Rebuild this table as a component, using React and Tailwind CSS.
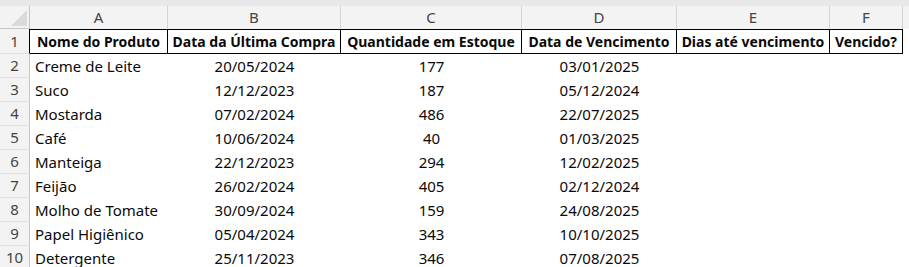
import React from "react";

const columns = [
    { key: "A", width: "w-[138px]" },
    { key: "B", width: "w-[173px]" },
    { key: "C", width: "w-[181px]" },
    { key: "D", width: "w-[155px]" },
    { key: "E", width: "w-[153px]" },
    { key: "F", width: "w-[73px]" },
];

const headers = [
    "Nome do Produto",
    "Data da Última Compra",
    "Quantidade em Estoque",
    "Data de Vencimento",
    "Dias até vencimento",
    "Vencido?",
];

const produtos = [
    ["Creme de Leite", "20/05/2024", "177", "03/01/2025"],
    ["Suco", "12/12/2023", "187", "05/12/2024"],
    ["Mostarda", "07/02/2024", "486", "22/07/2025"],
    ["Café", "10/06/2024", "40", "01/03/2025"],
    ["Manteiga", "22/12/2023", "294", "12/02/2025"],
    ["Feijão", "26/02/2024", "405", "02/12/2024"],
    ["Molho de Tomate", "30/09/2024", "159", "24/08/2025"],
    ["Papel Higiênico", "05/04/2024", "343", "10/10/2025"],
    ["Detergente", "25/11/2023", "346", "07/08/2025"],
];

const RowNumber = ({ n, dark }) => (
    <div
        className={`w-[30px] shrink-0 flex items-center justify-center bg-[#f3f3f3] text-[#444] border-b border-[#e1e1e1] border-r ${dark ? "border-r-black" : "border-r-[#c6c6c6]"}`}
    >
        {n}
    </div>
);

const App = () => {
    return (
        <div
            className="w-[909px] h-[267px] overflow-hidden bg-white text-[15px] text-[#0a0a0a]"
            style={{ fontFamily: '"Noto Sans", "Open Sans", sans-serif' }}
        >
            {/* faixa superior */}
            <div className="h-[6px] bg-[#e8e8e8]" />

            {/* letras das colunas */}
            <div className="flex h-[23px] bg-[#f3f3f3] text-[#444]">
                <div className="w-[30px] shrink-0 relative border-r border-[#c6c6c6] border-b border-b-[#c6c6c6]">
                    <svg className="absolute left-[11px] top-[4px]" width="16" height="16" viewBox="0 0 16 16">
                        <polygon points="16,0 16,16 0,16" fill="#dadada" />
                    </svg>
                </div>
                {columns.map((c) => (
                    <div
                        key={c.key}
                        className={`${c.width} shrink-0 flex items-center justify-center border-r border-[#d4d4d4]`}
                    >
                        {c.key}
                    </div>
                ))}
                <div className="flex-1" />
            </div>

            {/* linha 1: cabeçalho */}
            <div className="flex h-[25px]">
                <RowNumber n={1} dark />
                {headers.map((h, i) => (
                    <div
                        key={h}
                        className={`${columns[i].width} shrink-0 flex items-center justify-center text-[14px] font-bold text-[#0a0a0a] border-y border-r border-black whitespace-nowrap`}
                    >
                        {h}
                    </div>
                ))}
                <div className="flex-1" />
            </div>

            {/* dados */}
            {produtos.map((p, idx) => (
                <div key={p[0]} className="flex h-[24px]">
                    <RowNumber n={idx + 2} />
                    <div className={`${columns[0].width} shrink-0 flex items-center pl-[5px] whitespace-nowrap`}>{p[0]}</div>
                    <div className={`${columns[1].width} shrink-0 flex items-center justify-center`}>{p[1]}</div>
                    <div className={`${columns[2].width} shrink-0 flex items-center justify-center`}>{p[2]}</div>
                    <div className={`${columns[3].width} shrink-0 flex items-center justify-center`}>{p[3]}</div>
                    <div className={`${columns[4].width} shrink-0`} />
                    <div className={`${columns[5].width} shrink-0`} />
                    <div className="flex-1" />
                </div>
            ))}
        </div>
    );
};

export default App;
